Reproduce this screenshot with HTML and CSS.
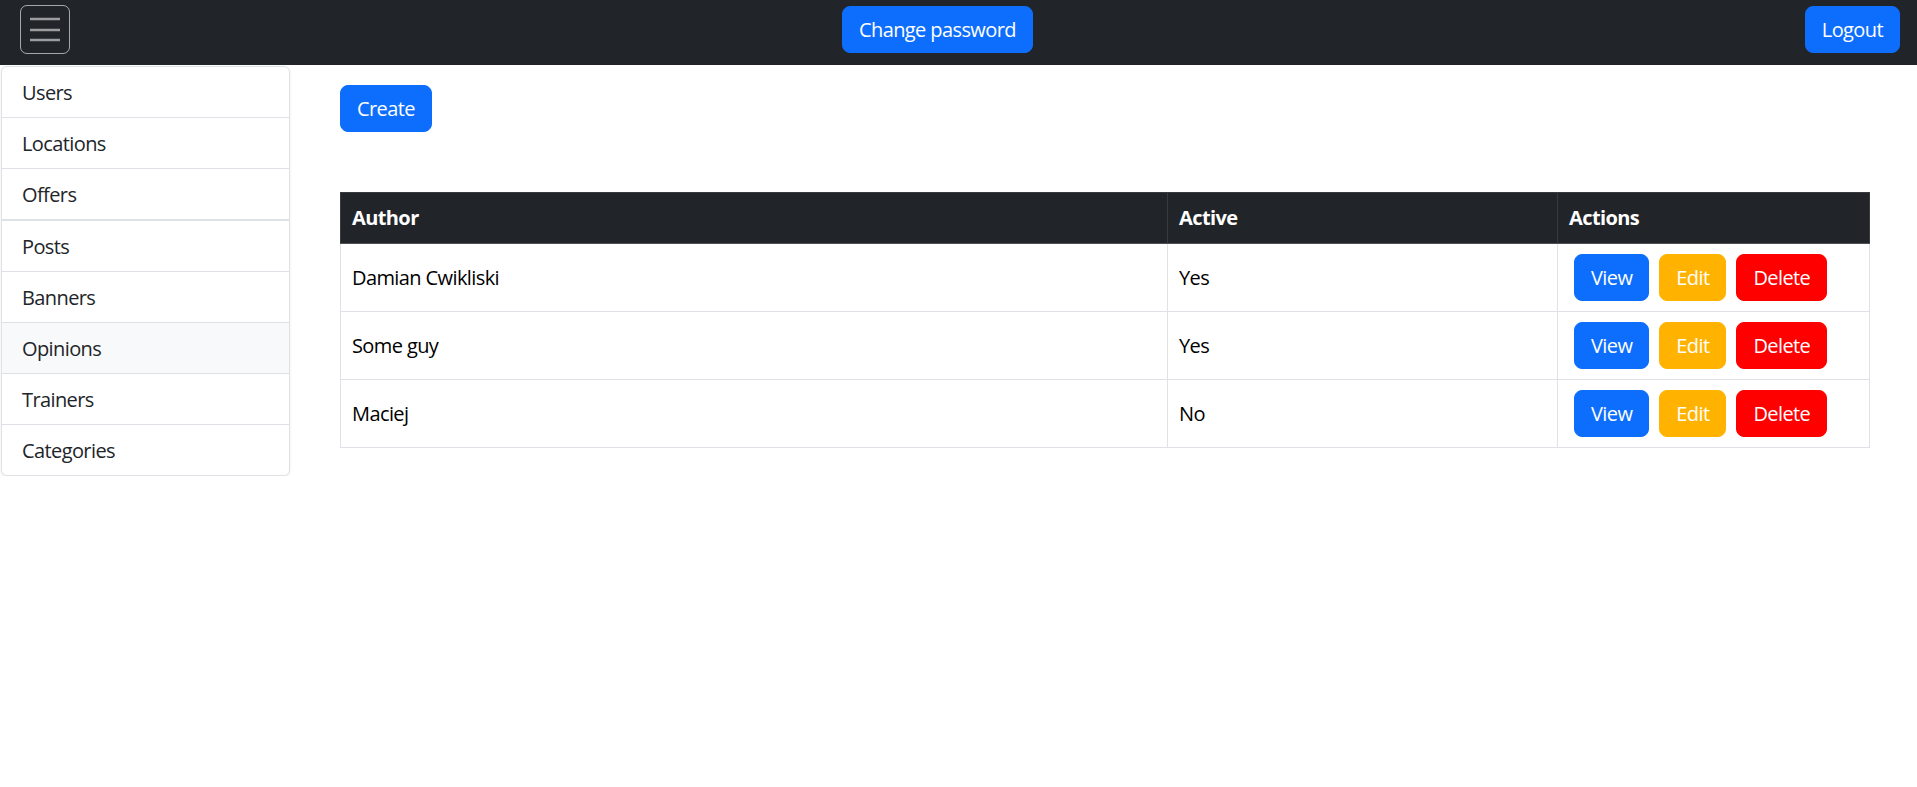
FILE: index.html
```html
<!DOCTYPE html>
<html lang="en">
<head>
<meta charset="utf-8">
<title>Opinions</title>
<link rel="stylesheet" href="styles.css">
</head>
<body>
<nav class="topbar">
  <button class="toggler" type="button" aria-label="Toggle menu">
    <svg class="toggler-icon" width="30" height="30" viewBox="0 0 30 30" aria-hidden="true">
      <path d="M0 4h30M0 15h30M0 25h30" stroke="rgba(255,255,255,0.55)" stroke-width="2.4" fill="none"/>
    </svg>
  </button>
  <button class="btn btn-lg btn-blue" type="button">Change password</button>
  <button class="btn btn-lg btn-blue" type="button">Logout</button>
</nav>

<div class="layout">
  <aside class="sidebar">
    <ul class="menu">
      <li class="menu-item">Users</li>
      <li class="menu-item">Locations</li>
      <li class="menu-item menu-item-sep">Offers</li>
      <li class="menu-item">Posts</li>
      <li class="menu-item">Banners</li>
      <li class="menu-item menu-item-active">Opinions</li>
      <li class="menu-item">Trainers</li>
      <li class="menu-item">Categories</li>
    </ul>
  </aside>

  <main class="content">
    <div class="toolbar">
      <button class="btn btn-lg btn-blue" type="button">Create</button>
    </div>

    <table class="data-table">
      <colgroup>
        <col class="col-author">
        <col class="col-active">
        <col class="col-actions">
      </colgroup>
      <thead>
        <tr>
          <th>Author</th>
          <th>Active</th>
          <th>Actions</th>
        </tr>
      </thead>
      <tbody>
        <tr>
          <td>Damian Cwikliski</td>
          <td>Yes</td>
          <td>
            <div class="actions">
              <button class="btn btn-lg btn-blue" type="button">View</button>
              <button class="btn btn-lg btn-yellow" type="button">Edit</button>
              <button class="btn btn-lg btn-red" type="button">Delete</button>
            </div>
          </td>
        </tr>
        <tr>
          <td>Some guy</td>
          <td>Yes</td>
          <td>
            <div class="actions">
              <button class="btn btn-lg btn-blue" type="button">View</button>
              <button class="btn btn-lg btn-yellow" type="button">Edit</button>
              <button class="btn btn-lg btn-red" type="button">Delete</button>
            </div>
          </td>
        </tr>
        <tr>
          <td>Maciej</td>
          <td>No</td>
          <td>
            <div class="actions">
              <button class="btn btn-lg btn-blue" type="button">View</button>
              <button class="btn btn-lg btn-yellow" type="button">Edit</button>
              <button class="btn btn-lg btn-red" type="button">Delete</button>
            </div>
          </td>
        </tr>
      </tbody>
    </table>
  </main>
</div>
</body>
</html>
```

FILE: styles.css
```css
* {
  box-sizing: border-box;
}

html, body {
  margin: 0;
  padding: 0;
  background: #fff;
}

body {
  font-family: "Open Sans", "Noto Sans", sans-serif;
  font-size: 20px;
  line-height: 30px;
  letter-spacing: -0.6px;
  color: #212529;
}

/* ---------- top bar ---------- */
.topbar {
  height: 65px;
  background: #212529;
  display: flex;
  align-items: center;
  justify-content: space-between;
  padding: 5px 17px 11px 20px;
}

.toggler {
  width: 50px;
  height: 49px;
  padding: 0;
  margin: 0;
  background: transparent;
  border: 1px solid rgba(255, 255, 255, 0.6);
  border-radius: 7px;
  display: flex;
  align-items: center;
  justify-content: center;
  cursor: pointer;
}

.toggler-icon {
  display: block;
  width: 30px;
  height: 30px;
}

/* ---------- buttons ---------- */
.btn {
  font-family: inherit;
  letter-spacing: inherit;
  display: inline-block;
  border: 1px solid transparent;
  color: #fff;
  cursor: pointer;
  margin: 0;
  white-space: nowrap;
}

.btn-lg {
  font-size: 20px;
  line-height: 29px;
  padding: 8px 16px;
  border-radius: 8px;
}

.btn-blue {
  background: #0d6efd;
  border-color: #0d6efd;
}

.btn-yellow {
  background: #ffb300;
  border-color: #ffb300;
}

.btn-red {
  background: #ff0000;
  border-color: #ff0000;
}

/* ---------- layout ---------- */
.layout {
  display: flex;
  align-items: flex-start;
}

.sidebar {
  width: 289px;
  margin: 1px 0 0 1px;
  border: 1px solid #dee2e6;
  border-radius: 6px;
  background: #fff;
  box-shadow: 0 1px 3px rgba(0, 0, 0, 0.08);
  overflow: hidden;
  flex: none;
}

.menu {
  list-style: none;
  margin: 0;
  padding: 0;
}

.menu-item {
  padding: 11px 20px 9px;
  line-height: 30px;
  font-size: 20px;
  color: #212529;
  border-top: 1px solid #dee2e6;
}

.menu-item:first-child {
  border-top: none;
}

.menu-item-sep {
  border-bottom: 1px solid #dee2e6;
}

.menu-item-active {
  background: #f8f9fa;
}

.content {
  flex: 1;
  padding: 20px 48px 0 50px;
}

.toolbar {
  display: flex;
  margin-bottom: 60px;
}

/* ---------- table ---------- */
.data-table {
  width: 1529px;
  border-collapse: collapse;
  table-layout: fixed;
  color: #000;
}

.col-author { width: 827px; }
.col-active { width: 390px; }
.col-actions { width: 312px; }

.data-table th,
.data-table td {
  padding: 10px 11px;
  text-align: left;
  vertical-align: middle;
  border: 1px solid #dee2e6;
}

.data-table thead th {
  background: #212529;
  color: #fff;
  font-weight: 700;
  border-color: #373b3e;
  border-bottom-color: #4d5154;
}

.actions {
  display: flex;
  gap: 10px;
  padding-left: 5px;
}
```
